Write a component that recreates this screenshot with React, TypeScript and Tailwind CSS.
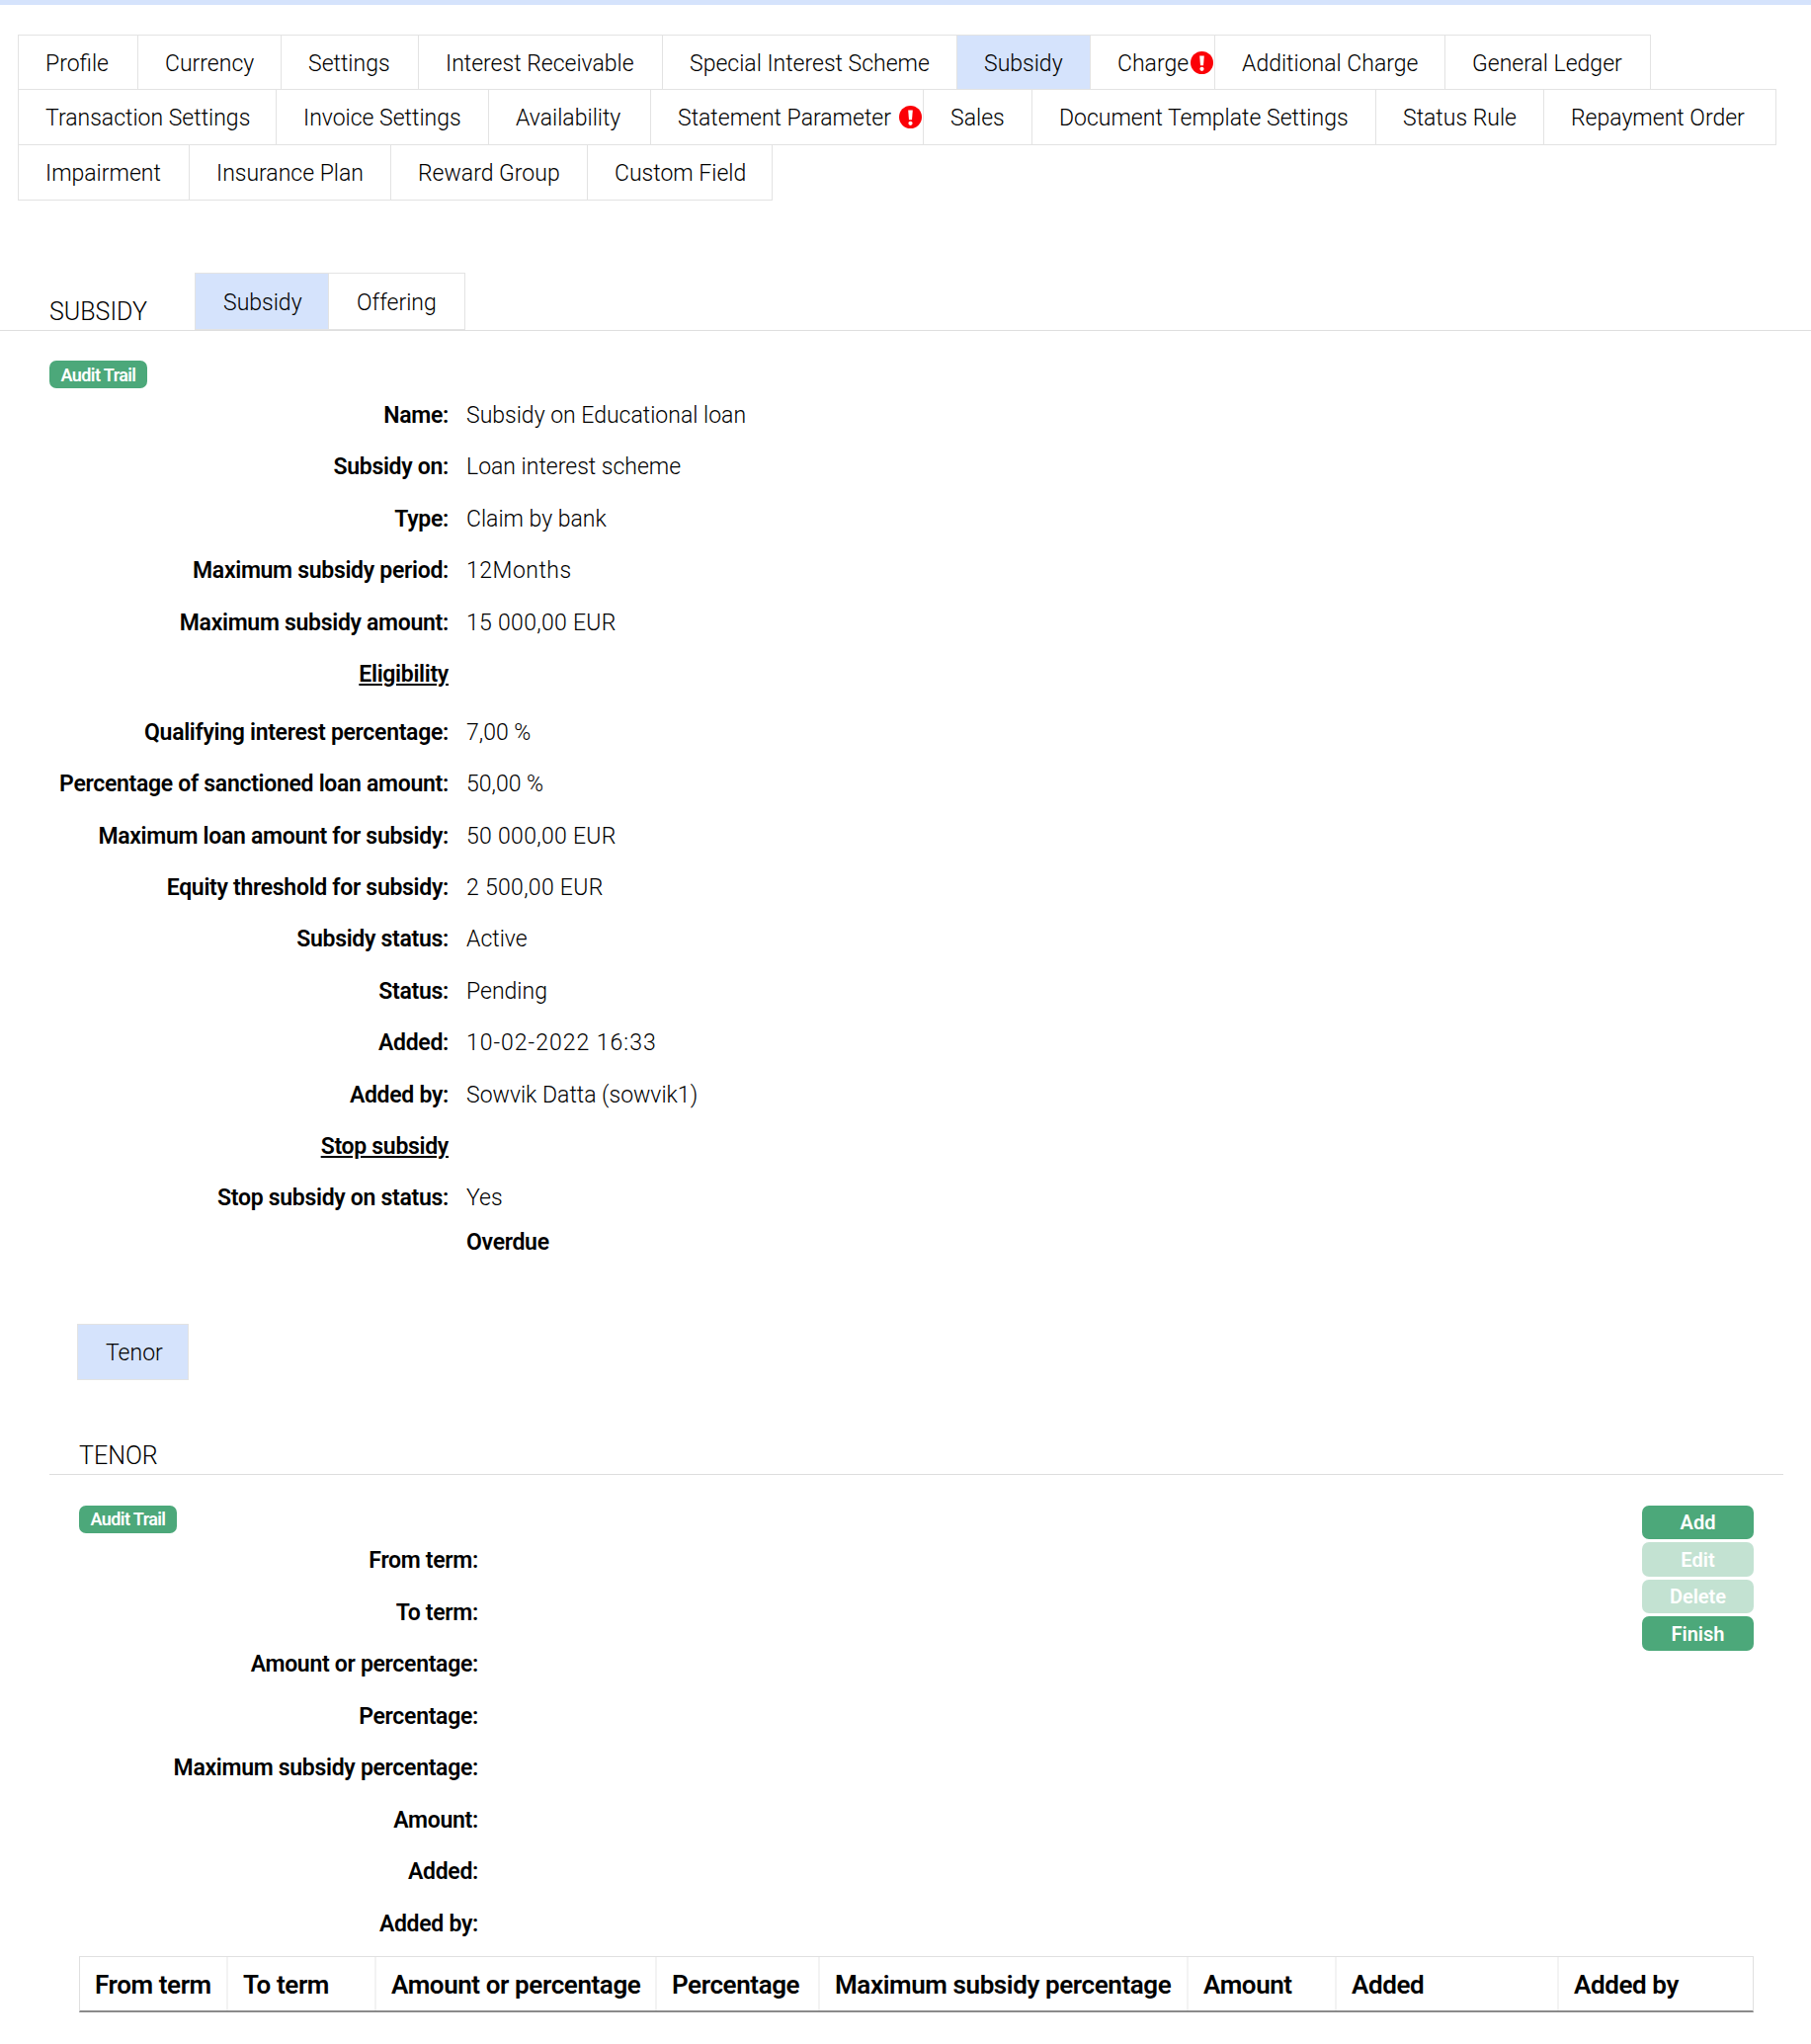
const tabRows = [
  [
    { name: 'Profile', w: 'w-[122px]' },
    { name: 'Currency', w: 'w-[146px]' },
    { name: 'Settings', w: 'w-[140px]' },
    { name: 'Interest Receivable', w: 'w-[248px]' },
    { name: 'Special Interest Scheme', w: 'w-[299px]' },
    { name: 'Subsidy', w: 'w-[136px]', active: true },
    { name: 'Charge', w: 'w-[127px]', alert: true },
    { name: 'Additional Charge', w: 'w-[234px]' },
    { name: 'General Ledger', w: 'w-[209px]' },
  ],
  [
    { name: 'Transaction Settings', w: 'w-[262px]' },
    { name: 'Invoice Settings', w: 'w-[216px]' },
    { name: 'Availability', w: 'w-[165px]' },
    { name: 'Statement Parameter', w: 'w-[277px]', alert: true },
    { name: 'Sales', w: 'w-[111px]' },
    { name: 'Document Template Settings', w: 'w-[349px]' },
    { name: 'Status Rule', w: 'w-[171px]' },
    { name: 'Repayment Order', w: 'w-[236px]' },
  ],
  [
    { name: 'Impairment', w: 'w-[174px]' },
    { name: 'Insurance Plan', w: 'w-[205px]' },
    { name: 'Reward Group', w: 'w-[200px]' },
    { name: 'Custom Field', w: 'w-[188px]' },
  ],
];

const subsidyRows = [
  { label: 'Name:', value: 'Subsidy on Educational loan' },
  { label: 'Subsidy on:', value: 'Loan interest scheme' },
  { label: 'Type:', value: 'Claim by bank' },
  { label: 'Maximum subsidy period:', value: '12Months', spacing: 'tracking-[0.5px]' },
  { label: 'Maximum subsidy amount:', value: '15 000,00 EUR', spacing: 'tracking-[0.3px]' },
];

const eligibilityRows = [
  { label: 'Qualifying interest percentage:', value: '7,00 %' },
  { label: 'Percentage of sanctioned loan amount:', value: '50,00 %' },
  { label: 'Maximum loan amount for subsidy:', value: '50 000,00 EUR', spacing: 'tracking-[0.3px]' },
  { label: 'Equity threshold for subsidy:', value: '2 500,00 EUR', spacing: 'tracking-[0.3px]' },
  { label: 'Subsidy status:', value: 'Active' },
  { label: 'Status:', value: 'Pending' },
  { label: 'Added:', value: '10-02-2022 16:33', spacing: 'tracking-[1px]' },
  { label: 'Added by:', value: 'Sowvik Datta (sowvik1)' },
];

const tenorLabels = [
  'From term:',
  'To term:',
  'Amount or percentage:',
  'Percentage:',
  'Maximum subsidy percentage:',
  'Amount:',
  'Added:',
  'Added by:',
];

const tenorColumns = [
  { name: 'From term', w: 'w-[150px]' },
  { name: 'To term', w: 'w-[150px]' },
  { name: 'Amount or percentage', w: 'w-[284px]' },
  { name: 'Percentage', w: 'w-[165px]' },
  { name: 'Maximum subsidy percentage', w: 'w-[373px]' },
  { name: 'Amount', w: 'w-[150px]' },
  { name: 'Added', w: 'w-[225px]' },
  { name: 'Added by', w: 'flex-1' },
];

function AlertIcon() {
  return (
    <svg viewBox="0 0 24 24" className="ml-auto mr-px -mt-[4px] w-[23px] h-[23px] shrink-0">
      <circle cx="12" cy="12" r="12" fill="#fb0007" />
      <path d="M9.6 4.6h4.8l-.8 10.2h-3.2z" fill="#fff" />
      <circle cx="12" cy="18.6" r="2.2" fill="#fff" />
    </svg>
  );
}

function Tab({ name, w, active, alert }: { name: string; w: string; active?: boolean; alert?: boolean }) {
  return (
    <div
      className={`${w} h-full -mr-px flex items-center pl-[27px] pt-[4px] border border-[#e3e3e3] ${
        active ? 'bg-[#d5e3fc]' : 'bg-white'
      }`}
    >
      <span className="whitespace-nowrap">{name}</span>
      {alert && <AlertIcon />}
    </div>
  );
}

function AuditTrail() {
  return (
    <div className="w-[99px] h-[28px] rounded-[7px] bg-[#4ca87a] text-white text-[18px] font-semibold tracking-[-0.6px] flex items-center justify-center">
      Audit Trail
    </div>
  );
}

function DetailRow({ label, value, spacing }: { label: string; value?: string; spacing?: string }) {
  return (
    <div className="flex h-[52.4px] pt-[4px] items-center">
      <div className="w-[454px] text-right font-semibold tracking-[-0.3px] whitespace-nowrap">{label}</div>
      {value && <div className={`ml-[18px] whitespace-nowrap ${spacing ?? ''}`}>{value}</div>}
    </div>
  );
}

function ActionButton({ label, disabled }: { label: string; disabled?: boolean }) {
  return (
    <div
      className={`w-[113px] h-[34.5px] rounded-[7px] bg-[#4ca87a] text-white text-[20px] font-semibold flex items-center justify-center ${
        disabled ? 'opacity-[0.33]' : ''
      }`}
    >
      {label}
    </div>
  );
}

export default function App() {
  return (
    <div className="min-h-[2069px] bg-white text-black text-[23px] font-['Roboto',sans-serif] font-light">
      <div className="h-[5px] bg-[#d5e3fc]" />

      {/* Top tabs */}
      <div className="pt-[30px] pl-[18px]">
        {tabRows.map((row, i) => (
          <div key={i} className={`flex -mb-px ${i === 0 ? 'h-[56px]' : 'h-[57px]'}`}>
            {row.map((tab) => (
              <Tab key={tab.name} {...tab} />
            ))}
          </div>
        ))}
      </div>

      {/* Subsidy header */}
      <div className="mt-[74px] h-[59px] flex border-b border-[#dedede]">
        <div className="w-[197px] pl-[50px] pt-[21px] text-[25px]">SUBSIDY</div>
        <div className="flex h-[58px]">
          <div className="w-[136px] flex items-center pl-[28px] pt-[4px] border border-[#e3e3e3] bg-[#d5e3fc]">Subsidy</div>
          <div className="w-[139px] -ml-px flex items-center pl-[28px] pt-[4px] border border-[#e3e3e3]">Offering</div>
        </div>
      </div>

      <div className="pl-[50px] pt-[30px]">
        <AuditTrail />
      </div>

      {/* Subsidy details */}
      <div>
        {subsidyRows.map((row) => (
          <DetailRow key={row.label} {...row} />
        ))}
        <div className="flex h-[59px] pt-[3px] items-center">
          <div className="w-[454px] pb-[6px] text-right font-semibold tracking-[-0.3px] underline">Eligibility</div>
        </div>
        {eligibilityRows.map((row) => (
          <DetailRow key={row.label} {...row} />
        ))}
        <div className="flex h-[52.4px] pt-[4px] items-center">
          <div className="w-[454px] text-right font-semibold tracking-[-0.3px] underline">Stop subsidy</div>
        </div>
        <DetailRow label="Stop subsidy on status:" value="Yes" />
        <div className="pl-[472px] h-[38px] pt-[2px] flex items-center font-semibold tracking-[-0.3px]">Overdue</div>
      </div>

      {/* Tenor tab */}
      <div className="mt-[64px] ml-[78px] w-[113px] h-[57px] flex items-center pl-[28px] pt-[3px] border border-[#e3e3e3] bg-[#d5e3fc]">
        Tenor
      </div>

      {/* Tenor section */}
      <div className="mt-[58px] ml-[50px] mr-[28px] h-[38px] pl-[30px] border-b border-[#dedede] text-[25px] leading-[38px]">
        TENOR
      </div>

      <div className="ml-[80px] mr-[58px] pt-[31px] flex justify-between">
        <div>
          <AuditTrail />
          <div className="-ml-[80px]">
            {tenorLabels.map((label) => (
              <div key={label} className="flex h-[52.6px] pt-[4px] items-center">
                <div className="w-[484px] text-right font-semibold tracking-[-0.3px]">{label}</div>
              </div>
            ))}
          </div>
        </div>
        <div className="flex flex-col gap-[3px]">
          <ActionButton label="Add" />
          <ActionButton label="Edit" disabled />
          <ActionButton label="Delete" disabled />
          <ActionButton label="Finish" />
        </div>
      </div>

      {/* Tenor table */}
      <div className="mt-[7px] ml-[80px] w-[1695px] h-[57px] flex border border-[#e0e0e0] border-b-2 border-b-[#8a8a8a] text-[26px] font-semibold tracking-[-0.4px]">
        {tenorColumns.map((col) => (
          <div key={col.name} className={`${col.w} flex items-center pl-[15px] pt-[4px] border-r-2 border-r-[#f3f3f3] last:border-r-0 whitespace-nowrap`}>
            {col.name}
          </div>
        ))}
      </div>
    </div>
  );
}
